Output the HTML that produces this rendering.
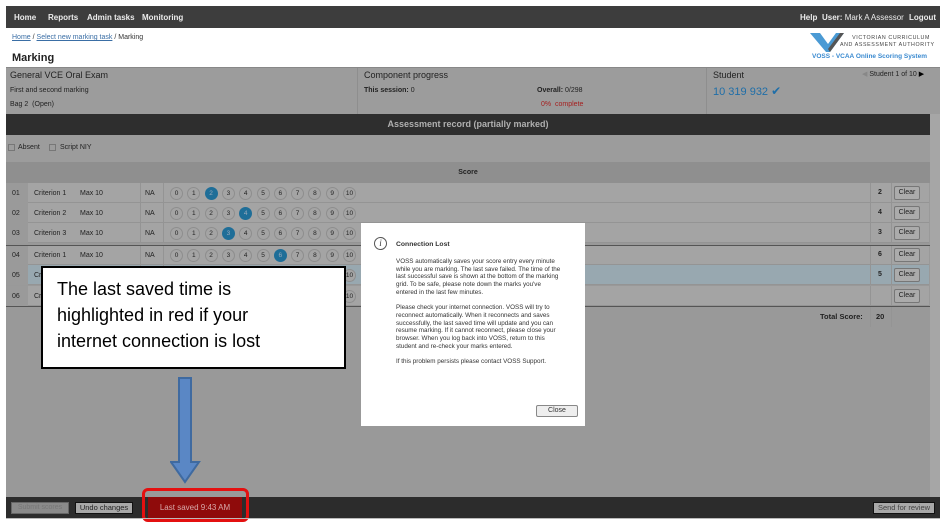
<!DOCTYPE html>
<html><head><meta charset="utf-8"><style>
*{margin:0;padding:0;box-sizing:border-box}
body{width:950px;height:529px;background:#fff;position:relative;overflow:hidden;font-family:"Liberation Sans",Arial,sans-serif;color:#222}
.a{position:absolute}
.nav{left:6px;top:6px;width:934px;height:22px;background:#3d3d3d;color:#ececec;font-size:8px;font-weight:bold}
.nav span{position:absolute;top:7px}
.row{left:6px;width:923px;height:20px;border-bottom:1px solid #949494;font-size:7px}
.row .n{position:absolute;left:0;top:0;width:22px;height:20px;background:#9a9a9a;padding:7px 0 0 6px}
.row .c{position:absolute;left:28px;top:7px}
.row .m{position:absolute;left:74px;top:7px}
.row .na{position:absolute;left:134px;top:0;width:24px;height:20px;border-left:1px solid #949494;border-right:1px solid #949494;padding:7px 0 0 4px}
.circ{position:absolute;top:4px;width:13px;height:13px;border-radius:50%;border:1px solid #8e8e8e;background:#a4a4a4;font-size:6.5px;text-align:center;line-height:11px}
.circ.s{background:#1f6e98;border-color:#1f6e98;color:#9ab}
.sc{position:absolute;left:864px;top:0;width:22px;height:20px;border-left:1px solid #949494;border-right:1px solid #949494;font-weight:bold;padding:6px 0 0 7px}
.cl{position:absolute;left:888px;top:3px;width:26px;height:14px;border:1px solid #777;border-radius:2px;background:#ababab;font-size:7px;text-align:center;line-height:12px}
</style></head><body>
<div class="a nav"><span style="left:8px">Home</span><span style="left:42px">Reports</span><span style="left:81px">Admin tasks</span><span style="left:136px">Monitoring</span>
<span style="left:794px">Help</span><span style="left:816px">User: <span style="position:static;font-weight:normal">Mark A Assessor</span></span><span style="left:903px">Logout</span></div>
<div class="a" style="left:12px;top:34px;font-size:7px;color:#333"><span style="color:#3a6ea5;text-decoration:underline">Home</span> / <span style="color:#3a6ea5;text-decoration:underline">Select new marking task</span> / Marking</div>
<div class="a" style="left:12px;top:52px;font-size:11px;font-weight:bold">Marking</div>
<svg class="a" style="left:810px;top:31px" width="34" height="22"><polygon points="0,2 10,2 18,13 26,2 34,2 20,21 16,21" fill="#4a9ad4"/><polygon points="20,21 34,2 30,2 18,18" fill="#555"/></svg>
<div class="a" style="left:840px;top:35px;font-size:5.3px;letter-spacing:0.6px;color:#444;line-height:7px;text-align:right;width:90px;white-space:nowrap">VICTORIAN CURRICULUM<br>AND ASSESSMENT AUTHORITY</div>
<div class="a" style="left:812px;top:53px;font-size:6.5px;font-weight:bold;color:#3a8ad0">VOSS - VCAA Online Scoring System</div>
<div class="a" style="left:6px;top:67px;width:934px;height:47px;background:#9c9c9c;border-top:1px solid #888"></div>
<div class="a" style="left:357px;top:68px;width:1px;height:46px;background:#8e8e8e"></div>
<div class="a" style="left:706px;top:68px;width:1px;height:46px;background:#8e8e8e"></div>
<div class="a" style="left:10px;top:70px;font-size:9px">General VCE Oral Exam</div>
<div class="a" style="left:10px;top:87px;font-size:7px">First and second marking</div>
<div class="a" style="left:10px;top:101px;font-size:7px">Bag 2 &nbsp;(Open)</div>
<div class="a" style="left:364px;top:70px;font-size:9px">Component progress</div>
<div class="a" style="left:364px;top:87px;font-size:7px;font-weight:bold">This session: <span style="font-weight:normal">0</span></div>
<div class="a" style="left:537px;top:87px;font-size:7px;font-weight:bold">Overall: <span style="font-weight:normal">0/298</span></div>
<div class="a" style="left:541px;top:101px;font-size:7px;color:#a52020">0% &nbsp;complete</div>
<div class="a" style="left:713px;top:70px;font-size:9px">Student</div>
<div class="a" style="left:713px;top:84px;font-size:11px;color:#1f6ea8">10 319 932 <span style="font-size:12px">✔</span></div>
<div class="a" style="left:862px;top:70px;font-size:7px"><span style="color:#888">◀</span> Student 1 of 10 <span style="color:#000">▶</span></div>
<div class="a" style="left:6px;top:114px;width:924px;height:21px;background:#2e2e2e;color:#b0b0b0;font-size:9px;font-weight:bold;text-align:center;line-height:21px">Assessment record (partially marked)</div>
<div class="a" style="left:6px;top:135px;width:924px;height:27px;background:#9c9c9c;font-size:7px"><span class="a" style="left:2px;top:9px;width:7px;height:7px;border:1px solid #777"></span><span class="a" style="left:12px;top:9px">Absent</span><span class="a" style="left:43px;top:9px;width:7px;height:7px;border:1px solid #777"></span><span class="a" style="left:54px;top:9px">Script NIY</span></div>
<div class="a" style="left:6px;top:162px;width:924px;height:21px;background:#8f8f8f;font-size:7px;font-weight:bold;text-align:center;line-height:21px">Score</div>
<div class="a" style="left:6px;top:183px;width:924px;height:314px;background:#999"></div>
<div class="a" style="left:930px;top:114px;width:10px;height:383px;background:#a6a6a6"></div>
<div id="rows"></div>
<div class="a" style="left:6px;top:306px;width:924px;height:1px;background:#555"></div>
<div class="a" style="left:6px;top:245px;width:924px;height:1px;background:#555"></div>
<div class="a" style="left:820px;top:312px;font-size:7.5px;font-weight:bold">Total Score:</div>
<div class="a" style="left:870px;top:307px;width:22px;height:20px;border-left:1px solid #949494;border-right:1px solid #949494;font-size:7.5px;font-weight:bold;padding:5px 0 0 5px">20</div>
<div class="a" style="left:6px;top:497px;width:934px;height:21px;background:#2c2c2c"></div>
<div class="a" style="left:11px;top:502px;width:58px;height:12px;background:#8a8a8a;border:1px solid #666;font-size:7px;color:#777;text-align:center;line-height:10px">Submit scores</div>
<div class="a" style="left:75px;top:502px;width:58px;height:12px;background:#a8a8a8;border:1px solid #111;font-size:7.5px;text-align:center;line-height:10px">Undo changes</div>
<div class="a" style="left:148px;top:497px;width:94px;height:21px;background:#8f0b0b;color:#d8aaaa;font-size:8px;text-align:center;line-height:22px">Last saved 9:43 AM</div>
<div class="a" style="left:142px;top:488px;width:107px;height:34px;border:3px solid #e41010;border-radius:6px"></div>
<div class="a" style="left:873px;top:502px;width:62px;height:12px;background:#a8a8a8;border:1px solid #111;font-size:7.5px;color:#444;text-align:center;line-height:10px">Send for review</div>
<div class="a" style="left:6px;top:518px;width:934px;height:1px;background:#bbb"></div>
<svg class="a" style="left:170px;top:376px" width="46" height="118"><path d="M9,2 H21 V86 H29 L15,106 L1,86 H9 Z" fill="#5a87c5" stroke="#3f6aa0" stroke-width="2"/></svg>
<div class="a" style="left:41px;top:266px;width:305px;height:103px;background:#fff;border:2px solid #000;font-family:'Liberation Sans',sans-serif;font-size:18px;line-height:26px;padding:8px 0 0 14px;color:#000">The last saved time is<br>highlighted in red if your<br>internet connection is lost</div>
<div class="a" style="left:361px;top:223px;width:224px;height:203px;background:#fff;font-size:6.3px;line-height:7.7px;color:#333">
<div class="a" style="left:13px;top:14px;width:13px;height:13px;border:1px solid #555;border-radius:50%;font-family:'Liberation Serif',serif;font-style:italic;font-size:9px;text-align:center;line-height:11px">i</div>
<div class="a" style="left:35px;top:18px;font-weight:bold;font-size:6.8px">Connection Lost</div>
<div class="a" style="left:35px;top:35px;width:165px">VOSS automatically saves your score entry every minute while you are marking. The last save failed. The time of the last successful save is shown at the bottom of the marking grid. To be safe, please note down the marks you've entered in the last few minutes.<br><br>Please check your internet connection. VOSS will try to reconnect automatically. When it reconnects and saves successfully, the last saved time will update and you can resume marking. If it cannot reconnect, please close your browser. When you log back into VOSS, return to this student and re-check your marks entered.<br><br>If this problem persists please contact VOSS Support.</div>
<div class="a" style="left:175px;top:182px;width:42px;height:12px;border:1px solid #888;border-radius:2px;background:#eee;font-size:7px;text-align:center;line-height:10px">Close</div>
</div>
<script>
var d=[["01","Criterion 1",2,2,183],["02","Criterion 2",4,4,203],["03","Criterion 3",3,3,223],["04","Criterion 1",6,6,245],["05","Criterion 2",-1,5,265],["06","Criterion 3",-1,"",286]];
var h="";d.forEach(function(r,i){var bg=i==4?"background:#98a8b0;":"background:#a4a4a4;";h+='<div class="a row" style="top:'+r[4]+'px;'+bg+'"><div class="n">'+r[0]+'</div><div class="c">'+r[1]+'</div><div class="m">Max 10</div><div class="na">NA</div>';
for(var k=0;k<=10;k++){h+='<div class="circ'+(k==r[2]?' s':'')+'" style="left:'+(164+k*17.3)+'px">'+k+'</div>'}
h+='<div class="sc">'+r[3]+'</div><div class="cl">Clear</div></div>'});
document.getElementById("rows").innerHTML=h;
</script>
</body></html>
